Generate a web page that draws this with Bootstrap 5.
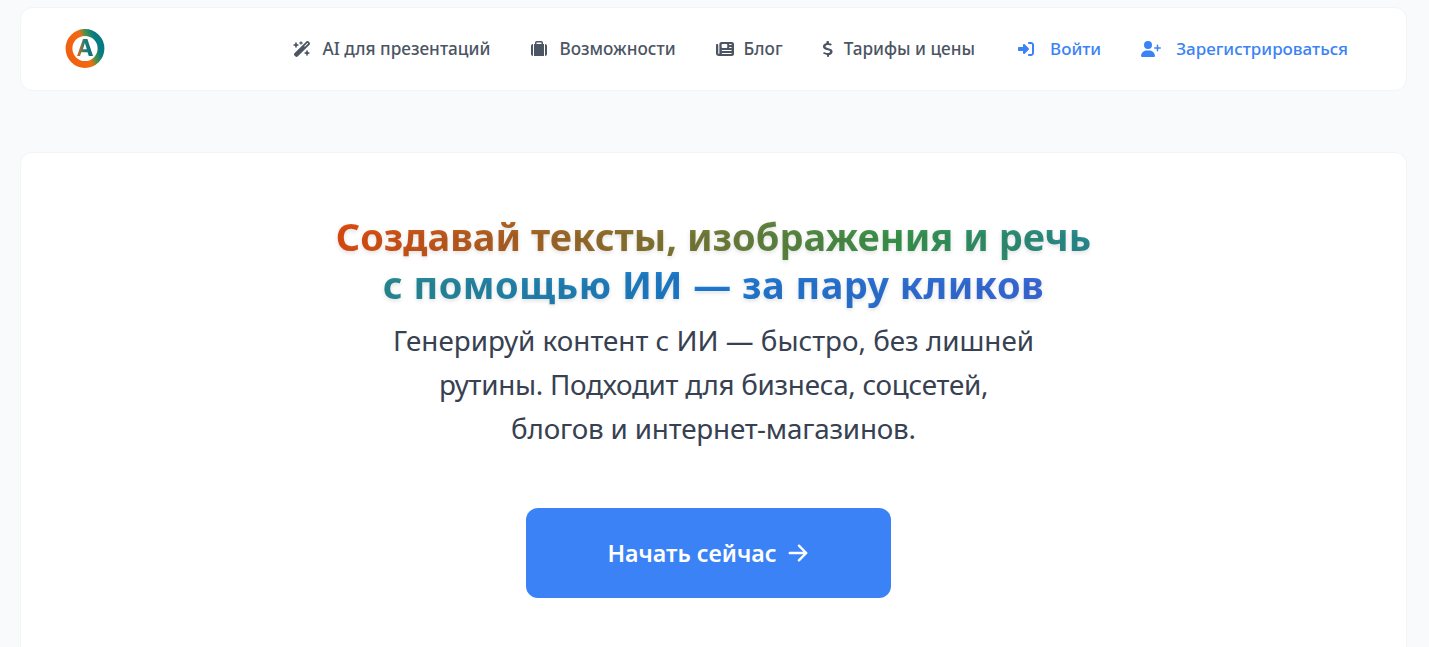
<!DOCTYPE html>
<html lang="ru">
<head>
    <meta charset="UTF-8">
    <meta name="viewport" content="width=device-width, initial-scale=1.0">
    <title>AI</title>
    <link href="https://cdn.jsdelivr.net/npm/bootstrap@5.3.0/dist/css/bootstrap.min.css" rel="stylesheet">
    <style>
        html, body { height: 100%; overflow: hidden; }
        body { background: #f9fafb; font-family: "Noto Sans", "Open Sans", sans-serif; padding: 7px 22px 0 20px; }
        .top-bar { height: 84px; background: #fff; border: 1px solid #f3f4f6; border-radius: 12px; padding: 0 58px 0 44px; }
        .logo-mark { width: 40px; height: 40px; display: block; }
        .menu-list { gap: 40px; }
        .menu-link { color: #4b5563; font-size: 17.2px; font-weight: 500; text-decoration: none; gap: 11px; }
        .menu-link.accent { color: #3b82f6; font-size: 17px; gap: 16px; }
        .menu-link.reg-link { gap: 15px; }
        .menu-link.login-link { margin-left: 3px; }
        .menu-link svg { height: 16px; width: auto; fill: currentColor; flex: none; }
        .menu-link svg.brief-icon { width: 18px; }
        .menu-link.news-link { gap: 10px; }
        .menu-link svg.news-icon { width: 18px; }
        .hero-card { margin-top: 61px; background: #fff; border: 1px solid #f3f4f6; border-bottom: 0; border-radius: 12px 12px 0 0; padding-top: 59px; }
        .hero-title { font-size: 38px; line-height: 48px; font-weight: 700; margin: 0; text-shadow: 0 2px 4px rgba(0,0,0,.12); }
        .hero-grad { background: linear-gradient(90deg, #e84e12 0%, #3a9a50 40%, #2a8f95 53%, #1e7fd6 75%, #3b6ce0 100%); background-clip: text; -webkit-background-clip: text; color: transparent; }
        .title-wide { letter-spacing: .46px; }
        .hero-sub { width: 672px; font-size: 27.8px; line-height: 44px; color: #374151; margin: 10px 0 0; }
        .sub-narrow { letter-spacing: -.27px; }
        .sub-tight { letter-spacing: -.18px; }
        .start-btn { width: 365px; height: 90px; margin: 58px 0 0 -11px; background: #3b82f6; color: #fff; border: 0; border-radius: 12px; font-size: 23.2px; font-weight: 600; gap: 10px; }
        .start-btn:hover { background: #3b82f6; color: #fff; }
        .start-btn svg { width: 22px; height: 22px; }
    </style>
</head>
<body class="d-flex flex-column">
    <!-- Top bar -->
    <nav class="top-bar d-flex align-items-center justify-content-between flex-shrink-0">
        <a href="#" aria-label="Логотип">
            <svg class="logo-mark" viewBox="0 0 40 40">
                <defs>
                    <linearGradient id="ringGrad" x1="0" y1=".7" x2="1" y2=".3">
                        <stop offset="0" stop-color="#f0600f"/>
                        <stop offset=".52" stop-color="#f26a12"/>
                        <stop offset=".66" stop-color="#4f9444"/>
                        <stop offset=".88" stop-color="#087a82"/>
                    </linearGradient>
                    <linearGradient id="letterGrad" x1="0" y1="0" x2="1" y2="0">
                        <stop offset="0" stop-color="#ee6a16"/>
                        <stop offset=".5" stop-color="#1c7f78"/>
                        <stop offset="1" stop-color="#0b6c78"/>
                    </linearGradient>
                </defs>
                <circle cx="20" cy="19.500" r="16" fill="none" stroke="url(#ringGrad)" stroke-width="6.8"/>
                <path d="M12 27 18 10h4.400L28 27h-4.200l-1.200-3.800h-6.300L15 27zM18 20.200h3.800L19.900 14z" fill="url(#letterGrad)" fill-rule="evenodd"/>
            </svg>
        </a>
        <div class="menu-list d-flex align-items-center">
            <a href="#" class="menu-link d-flex align-items-center">
                <svg viewBox="0 0 576 512"><path d="M234.700 42.700 197 56.800c-3 1.100-5 4-5 7.200s2 6.100 5 7.200l37.700 14.100 14.100 37.700c1.100 3 4 5 7.200 5s6.100-2 7.200-5l14.100-37.700L315 71.200c3-1.100 5-4 5-7.200s-2-6.100-5-7.200l-37.700-14.100L263.200 5c-1.100-3-4-5-7.200-5s-6.100 2-7.200 5zM46.100 395.400c-18.700 18.700-18.700 49.100 0 67.900l34.600 34.600c18.700 18.700 49.100 18.700 67.900 0l381.300-381.400c18.700-18.700 18.700-49.100 0-67.900l-34.600-34.500c-18.700-18.700-49.100-18.700-67.900 0zM484.600 82.600l-105 105-23.300-23.300 105-105zM7.500 117.200C3 118.900 0 123.200 0 128s3 9.100 7.500 10.800L64 160l21.200 56.500c1.700 4.500 6 7.500 10.800 7.500s9.100-3 10.800-7.500L128 160l56.500-21.200c4.500-1.700 7.500-6 7.500-10.800s-3-9.100-7.500-10.800L128 96l-21.200-56.500c-1.700-4.500-6-7.500-10.800-7.500s-9.100 3-10.800 7.500L64 96zm352 256c-4.500 1.700-7.500 6-7.500 10.800s3 9.100 7.500 10.800L416 416l21.200 56.500c1.700 4.500 6 7.500 10.800 7.500s9.100-3 10.800-7.500L480 416l56.500-21.200c4.500-1.700 7.500-6 7.500-10.800s-3-9.100-7.500-10.800L480 352l-21.200-56.500c-1.700-4.500-6-7.500-10.800-7.500s-9.100 3-10.800 7.500L416 352z"/></svg>
                AI для презентаций
            </a>
            <a href="#" class="menu-link d-flex align-items-center">
                <svg class="brief-icon" viewBox="0 0 512 512"><path d="M184 48h144c4.400 0 8 3.600 8 8v40H176V56c0-4.400 3.600-8 8-8zm-56 8v40H96v384h320V96h-32V56c0-30.900-25.100-56-56-56H184c-30.900 0-56 25.100-56 56zM64 96C28.700 96 0 124.700 0 160v256c0 35.300 28.700 64 64 64zm384 384c35.300 0 64-28.700 64-64V160c0-35.300-28.700-64-64-64z"/></svg>
                Возможности
            </a>
            <a href="#" class="menu-link news-link d-flex align-items-center">
                <svg class="news-icon" viewBox="0 0 512 512" preserveAspectRatio="none"><path d="M96 96c0-35.300 28.700-64 64-64h288c35.300 0 64 28.700 64 64v320c0 35.300-28.700 64-64 64H80c-44.200 0-80-35.800-80-80V128c0-17.700 14.300-32 32-32s32 14.300 32 32v272c0 8.800 7.200 16 16 16s16-7.200 16-16zm64 24v80c0 13.300 10.700 24 24 24h112c13.300 0 24-10.700 24-24v-80c0-13.300-10.700-24-24-24H184c-13.300 0-24 10.700-24 24zm208-8c0 8.800 7.200 16 16 16h48c8.800 0 16-7.200 16-16s-7.200-16-16-16h-48c-8.800 0-16 7.200-16 16zm0 96c0 8.800 7.200 16 16 16h48c8.800 0 16-7.200 16-16s-7.200-16-16-16h-48c-8.800 0-16 7.200-16 16zM160 304c0 8.800 7.200 16 16 16h256c8.800 0 16-7.200 16-16s-7.200-16-16-16H176c-8.800 0-16 7.200-16 16zm0 96c0 8.800 7.200 16 16 16h256c8.800 0 16-7.200 16-16s-7.200-16-16-16H176c-8.800 0-16 7.200-16 16z"/></svg>
                Блог
            </a>
            <a href="#" class="menu-link d-flex align-items-center">
                <svg viewBox="0 0 320 512"><path d="M160 0c17.700 0 32 14.300 32 32v35.700c1.600.2 3.100.4 4.700.7 10.600 1.600 42.100 6.700 55.100 10 17.100 4.300 27.500 21.700 23.200 38.900s-21.700 27.500-38.900 23.200c-9.300-2.400-37.600-7-48.900-8.700-32.100-4.800-59.600-2.400-78.500 5.900-18.600 8.200-25.700 18.500-27.600 29-2.100 11.800-.3 18.300 1.600 22.300 2 4.200 5.500 8.900 12.800 13.800 16.300 10.700 41.300 17.700 73.700 26.300l2.900.8c28.600 7.600 63.600 16.800 89.600 33.800 14.200 9.300 27.600 21.900 35.900 39.500 8.500 17.900 10.300 37.900 6.400 59.200-6.900 38-33.100 63.400-65.600 76.700-13.700 5.600-28.600 9.200-44.400 11V480c0 17.700-14.300 32-32 32s-32-14.300-32-32v-34.900c-.4-.1-.9-.1-1.300-.2-24.900-3.900-64.900-14.300-91.900-26.300C4.600 411.400-3.400 392 3.800 375.900s26.100-23.400 42.200-16.200c20.900 9.300 55.300 18.500 75.200 21.600 31.900 4.700 58.200 2 76-5.300 16.900-6.900 24.600-16.900 26.800-28.900 1.900-10.600.4-16.700-1.300-20.400-1.900-4-5.500-8.800-12.900-13.700-16.400-10.700-41.500-17.700-74-26.300l-2.800-.7c-28.500-7.600-63.500-16.900-89.500-33.900-14.200-9.300-27.500-22-35.800-39.600-8.400-17.900-10.100-37.900-6.100-59.200C9.400 116 37.400 91.700 68.900 77.800c12.700-5.600 26.700-9.300 41.100-11.400V32c0-17.700 14.300-32 32-32z"/></svg>
                Тарифы и цены
            </a>
            <a href="#" class="menu-link accent login-link d-flex align-items-center">
                <svg viewBox="0 0 512 512"><path d="M352 96h64c17.700 0 32 14.300 32 32v256c0 17.700-14.300 32-32 32h-64c-17.700 0-32 14.300-32 32s14.300 32 32 32h64c53 0 96-43 96-96V128c0-53-43-96-96-96h-64c-17.700 0-32 14.300-32 32s14.300 32 32 32zm-9.400 182.600c12.500-12.500 12.500-32.800 0-45.300l-128-128c-9.200-9.200-22.900-11.900-34.900-6.900S160 115.100 160 128v64H32c-17.700 0-32 14.300-32 32v64c0 17.700 14.300 32 32 32h128v64c0 12.900 7.800 24.600 19.800 29.600s25.700 2.200 34.900-6.900z"/></svg>
                Войти
            </a>
            <a href="#" class="menu-link accent reg-link d-flex align-items-center">
                <svg viewBox="0 0 640 512"><path d="M96 128a128 128 0 1 1 256 0 128 128 0 1 1-256 0zM0 482.300C0 383.800 79.800 304 178.300 304h91.400C368.200 304 448 383.800 448 482.300c0 16.400-13.300 29.700-29.700 29.700H29.700C13.300 512 0 498.700 0 482.300zM504 312v-64h-64c-13.300 0-24-10.700-24-24s10.700-24 24-24h64v-64c0-13.300 10.700-24 24-24s24 10.700 24 24v64h64c13.300 0 24 10.700 24 24s-10.700 24-24 24h-64v64c0 13.300-10.700 24-24 24s-24-10.700-24-24z"/></svg>
                Зарегистрироваться
            </a>
        </div>
    </nav>

    <!-- Hero -->
    <section class="hero-card flex-grow-1 d-flex flex-column align-items-center text-center">
        <h1 class="hero-title"><span class="hero-grad">Создавай тексты, изображения и речь<br><span class="title-wide">с помощью ИИ — за пару кликов</span></span></h1>
        <p class="hero-sub">Генерируй контент с ИИ — быстро, без лишней<br><span class="sub-narrow">рутины. Подходит для бизнеса, соцсетей,</span><br><span class="sub-tight">блогов и интернет-магазинов.</span></p>
        <a href="#" class="btn start-btn d-flex align-items-center justify-content-center">
            Начать сейчас
            <svg viewBox="0 0 24 24" fill="none" stroke="currentColor" stroke-width="2.6" stroke-linecap="round" stroke-linejoin="round"><path d="M3 12h18M13 4l8 8-8 8"/></svg>
        </a>
    </section>
</body>
</html>
